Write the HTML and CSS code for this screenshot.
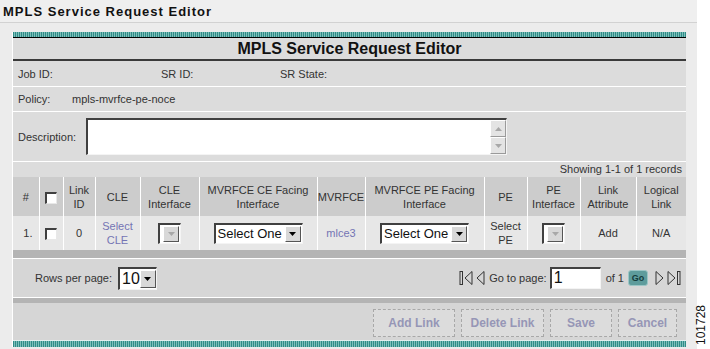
FILE: index.html
```html
<!DOCTYPE html>
<html lang="en">
<head>
    <meta charset="UTF-8">
    <title>MPLS Service Request Editor</title>
    <link rel="stylesheet" href="styles.css">
</head>
<body>
    <div class="screen">
        <div class="topbar">
            <h1>MPLS Service Request Editor</h1>
        </div>

        <div class="panel">
            <div class="stripe"></div>
            <div class="panel-title">MPLS Service Request Editor</div>

            <div class="info-row job-row">
                <span class="job-label">Job ID:</span>
                <span class="sr-label">SR ID:</span>
                <span>SR State:</span>
            </div>
            <div class="info-row policy-row">
                <span class="policy-label">Policy:</span>
                <span>mpls-mvrfce-pe-noce</span>
            </div>
            <div class="info-row desc-row">
                <span class="desc-label">Description:</span>
                <div class="textarea">
                    <div class="scrollbar">
                        <span class="scroll-btn"><svg width="7" height="4" viewBox="0 0 7 4"><polygon points="0,4 3.5,0 7,4" fill="#a8a8a8"/></svg></span>
                        <span class="scroll-btn"><svg width="7" height="4" viewBox="0 0 7 4"><polygon points="0,0 3.5,4 7,0" fill="#a8a8a8"/></svg></span>
                    </div>
                </div>
            </div>

            <div class="records">Showing 1-1 of 1 records</div>

            <table class="links">
                <colgroup>
                    <col style="width:26px"><col style="width:24px"><col style="width:32px"><col style="width:45px">
                    <col style="width:59px"><col style="width:118px"><col style="width:48px"><col style="width:119px">
                    <col style="width:43px"><col style="width:53px"><col style="width:56px"><col style="width:50px">
                </colgroup>
                <thead>
                    <tr>
                        <th>#</th>
                        <th><span class="checkbox"></span></th>
                        <th>Link<br>ID</th>
                        <th>CLE</th>
                        <th>CLE<br>Interface</th>
                        <th>MVRFCE CE Facing<br>Interface</th>
                        <th>MVRFCE</th>
                        <th>MVRFCE PE Facing<br>Interface</th>
                        <th>PE</th>
                        <th>PE<br>Interface</th>
                        <th>Link<br>Attribute</th>
                        <th>Logical<br>Link</th>
                    </tr>
                </thead>
                <tbody>
                    <tr>
                        <td class="num">1.</td>
                        <td><span class="checkbox"></span></td>
                        <td>0</td>
                        <td class="link">Select<br>CLE</td>
                        <td>
                            <div class="combo combo-off">
                                <span class="combo-btn"><svg width="7" height="4" viewBox="0 0 7 4"><polygon points="0,0 3.5,4 7,0" fill="#a8a8a8"/></svg></span>
                            </div>
                        </td>
                        <td>
                            <div class="combo combo-wide">
                                <span class="combo-text">Select One</span>
                                <span class="combo-btn"><svg width="7" height="4" viewBox="0 0 7 4"><polygon points="0,0 3.5,4 7,0" fill="#000"/></svg></span>
                            </div>
                        </td>
                        <td class="link">mlce3</td>
                        <td>
                            <div class="combo combo-wide">
                                <span class="combo-text">Select One</span>
                                <span class="combo-btn"><svg width="7" height="4" viewBox="0 0 7 4"><polygon points="0,0 3.5,4 7,0" fill="#000"/></svg></span>
                            </div>
                        </td>
                        <td>Select<br>PE</td>
                        <td>
                            <div class="combo combo-off">
                                <span class="combo-btn"><svg width="7" height="4" viewBox="0 0 7 4"><polygon points="0,0 3.5,4 7,0" fill="#a8a8a8"/></svg></span>
                            </div>
                        </td>
                        <td>Add</td>
                        <td>N/A</td>
                    </tr>
                </tbody>
            </table>

            <div class="bar"></div>

            <div class="pager">
                <div class="rows-per-page">
                    <span>Rows per page:</span>
                    <div class="combo combo-rows">
                        <span class="combo-text">10</span>
                        <span class="combo-btn"><svg width="7" height="4" viewBox="0 0 7 4"><polygon points="0,0 3.5,4 7,0" fill="#000"/></svg></span>
                    </div>
                </div>
                <div class="goto">
                    <svg class="nav-icon" width="14" height="16" viewBox="0 0 14 16"><rect x="1" y="1.5" width="2.5" height="13" fill="none" stroke="#333"/><polygon points="13,1.5 6,8 13,14.5" fill="none" stroke="#333"/></svg>
                    <svg class="nav-icon" width="9" height="16" viewBox="0 0 9 16"><polygon points="8,1.5 1,8 8,14.5" fill="none" stroke="#333"/></svg>
                    <span class="goto-label">Go to page:</span>
                    <div class="page-input">1</div>
                    <span class="of">of 1</span>
                    <span class="go-btn">Go</span>
                    <svg class="nav-icon" width="9" height="16" viewBox="0 0 9 16"><polygon points="1,1.5 8,8 1,14.5" fill="none" stroke="#333"/></svg>
                    <svg class="nav-icon" width="14" height="16" viewBox="0 0 14 16"><polygon points="1,1.5 8,8 1,14.5" fill="none" stroke="#333"/><rect x="10.5" y="1.5" width="2.5" height="13" fill="none" stroke="#333"/></svg>
                </div>
            </div>

            <div class="bar bar-thin"></div>

            <div class="actions">
                <button class="btn btn-add">Add Link</button>
                <button class="btn btn-delete">Delete Link</button>
                <button class="btn btn-save">Save</button>
                <button class="btn btn-cancel">Cancel</button>
            </div>

            <div class="stripe stripe-bottom"></div>
        </div>
    </div>

    <div class="fig-id">101728</div>
</body>
</html>
```

FILE: styles.css
```css
body {
    margin: 0;
    background-color: #fff;
    font-family: "Liberation Sans", Arial, sans-serif;
    font-size: 11px;
    color: #333;
}

/* 灰色外框 */
.screen {
    width: 697px;
    height: 349px;
    background-color: #ececec;
    overflow: hidden;
}

.topbar {
    height: 22px;
    border-bottom: 1px solid #d2d2d2;
    background-color: #efefef;
}

.topbar h1 {
    margin: 0;
    padding: 4px 0 0 3px;
    font-size: 13px;
    line-height: 15px;
    letter-spacing: 1px;
    color: #111;
}

.panel {
    margin: 9px 0 0 12px;
    width: 673px;
    border-left: 1px solid #fff;
    background-color: #dcdcdc;
}

.stripe {
    height: 5px;
    border-bottom: 1px solid #000;
    background: repeating-linear-gradient(90deg, #2f8c87 0 1px, #7dbfbb 1px 2px);
}

.stripe-bottom {
    height: 6px;
    border-top: 1px solid #e2efee;
    border-bottom: none;
}

.panel-title {
    height: 21px;
    line-height: 21px;
    border-bottom: 2px solid #3a3a3a;
    text-align: center;
    font-size: 16px;
    font-weight: bold;
    color: #111;
}

.info-row {
    display: flex;
    align-items: center;
    padding-left: 5px;
    border-bottom: 1px solid #fff;
}

.job-row {
    height: 25px;
}

.policy-row {
    height: 24px;
}

.desc-row {
    height: 49px;
}

.job-label {
    width: 143px;
}

.sr-label {
    width: 119px;
}

.policy-label {
    width: 54px;
}

.desc-label {
    width: 68px;
}

.textarea {
    box-sizing: border-box;
    width: 421px;
    height: 37px;
    background-color: #fff;
    border-top: 2px solid #404040;
    border-left: 2px solid #404040;
    border-right: 1px solid #f4f4f4;
    border-bottom: 1px solid #f4f4f4;
    display: flex;
    justify-content: flex-end;
}

.scrollbar {
    display: flex;
    flex-direction: column;
    width: 16px;
}

.scroll-btn {
    box-sizing: border-box;
    height: 17px;
    display: flex;
    align-items: center;
    justify-content: center;
    background-color: #e4e4e4;
    border: 1px solid #fff;
    border-right-color: #9a9a9a;
    border-bottom-color: #9a9a9a;
}

.records {
    height: 15px;
    line-height: 15px;
    text-align: right;
    padding-right: 4px;
}

.links {
    width: 673px;
    table-layout: fixed;
    border-collapse: collapse;
}

.links th,
.links td {
    padding: 0;
    text-align: center;
    border-left: 1px solid #fff;
    line-height: 14px;
}

.links th:first-child,
.links td:first-child {
    border-left: none;
}

.links th {
    height: 39px;
    background-color: #cccccc;
    font-weight: normal;
}

.links td {
    height: 34px;
    background-color: #e7e7e7;
}

.links td.num {
    text-align: right;
    padding-right: 6px;
}

.links td.link {
    color: #7474b4;
}

.checkbox {
    display: inline-block;
    box-sizing: border-box;
    width: 12px;
    height: 12px;
    vertical-align: middle;
    background-color: #fff;
    border-top: 2px solid #404040;
    border-left: 2px solid #404040;
    border-right: 1px solid #e8e8e8;
    border-bottom: 1px solid #e8e8e8;
}

/* 自绘下拉框 */
.combo {
    display: inline-flex;
    box-sizing: border-box;
    vertical-align: middle;
    background-color: #fff;
    border-top: 2px solid #404040;
    border-left: 2px solid #404040;
    border-right: 1px solid #f4f4f4;
    border-bottom: 1px solid #f4f4f4;
    padding: 1px;
    justify-content: space-between;
    align-items: stretch;
}

.combo-wide {
    width: 89px;
    height: 21px;
}

.combo-off {
    width: 23px;
    height: 21px;
    justify-content: flex-end;
}

.combo-rows {
    width: 39px;
    height: 23px;
}

.combo-text {
    font-size: 13px;
    line-height: 16px;
    color: #111;
    padding-left: 1px;
    white-space: nowrap;
}

.combo-rows .combo-text {
    font-size: 16px;
    line-height: 18px;
}

.combo-btn {
    flex: none;
    box-sizing: border-box;
    width: 16px;
    display: flex;
    align-items: center;
    justify-content: center;
    background-color: #d8d8d8;
    border: 1px solid #fff;
    border-right-color: #555;
    border-bottom-color: #555;
}

.bar {
    height: 8px;
    background-color: #b4b4b4;
    border-bottom: 1px solid #fff;
}

.bar-thin {
    height: 5px;
    border-bottom: none;
}

.pager {
    height: 38px;
    display: flex;
    align-items: center;
    justify-content: space-between;
    padding: 0 5px 0 22px;
    background-color: #d6d6d6;
    border-bottom: 1px solid #fff;
}

.rows-per-page {
    display: flex;
    align-items: center;
    gap: 6px;
}

.goto {
    display: flex;
    align-items: center;
    gap: 3px;
}

.goto-label {
    margin-left: 1px;
}

.page-input {
    box-sizing: border-box;
    width: 51px;
    height: 22px;
    padding-left: 2px;
    background-color: #fff;
    border-top: 2px solid #404040;
    border-left: 2px solid #404040;
    border-right: 1px solid #f4f4f4;
    border-bottom: 1px solid #f4f4f4;
    font-size: 16px;
    line-height: 18px;
    color: #111;
}

.of {
    margin-left: 2px;
}

.go-btn {
    box-sizing: border-box;
    width: 20px;
    height: 16px;
    margin: 0 4px 0 1px;
    border: 1px solid #9cc6c6;
    border-radius: 3px;
    background-color: #5e9c9c;
    color: #153d3d;
    font-size: 9px;
    font-weight: bold;
    line-height: 14px;
    text-align: center;
}

.actions {
    height: 37px;
    display: flex;
    justify-content: flex-end;
    align-items: flex-start;
    gap: 6px;
    padding: 6px 9px 0 0;
    box-sizing: border-box;
    background-color: #d6d6d6;
}

.btn {
    height: 28px;
    padding: 0;
    border: 1px dashed #a8a8a8;
    background-color: #dcdcdc;
    font-family: "Liberation Sans", Arial, sans-serif;
    font-size: 12px;
    font-weight: bold;
    color: #9696b6;
}

.btn-add {
    width: 82px;
}

.btn-delete {
    width: 83px;
}

.btn-save {
    width: 62px;
}

.btn-cancel {
    width: 59px;
}

/* 图号 */
.fig-id {
    position: absolute;
    left: 680px;
    top: 318px;
    transform: rotate(-90deg);
    font-size: 12px;
    line-height: 14px;
    width: 42px;
    text-align: center;
    color: #111;
}
```
